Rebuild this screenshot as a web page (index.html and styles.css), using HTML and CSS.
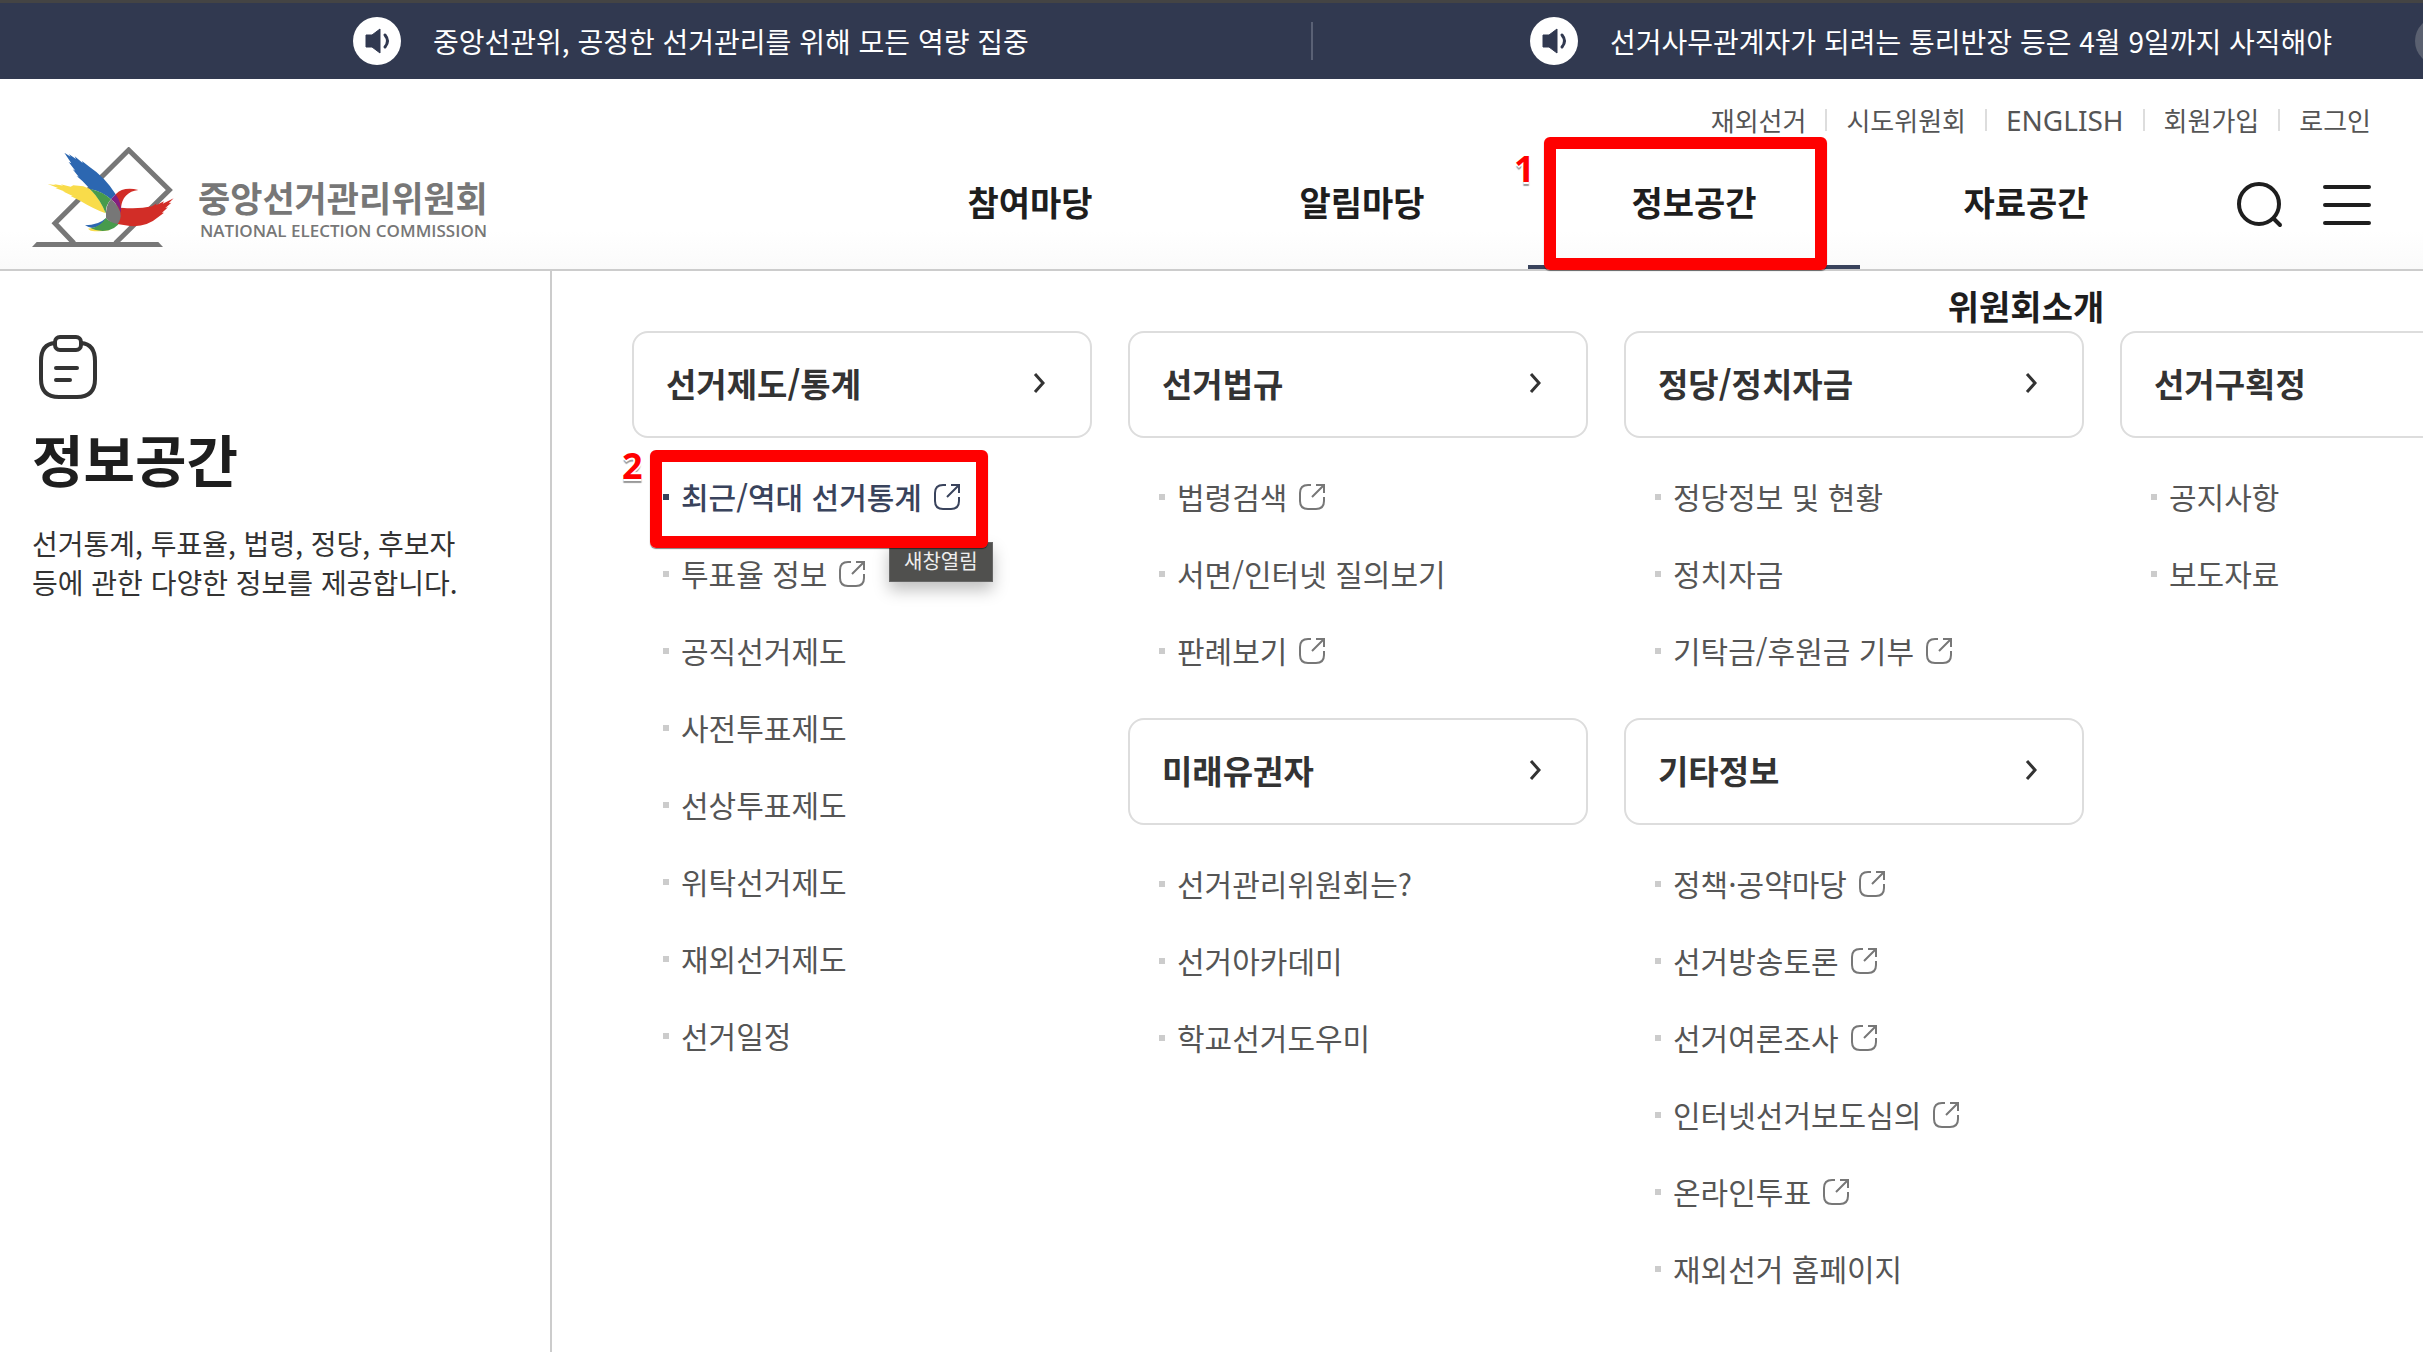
FILE: index.html
```
<!DOCTYPE html>
<html lang="ko">

<head>
    <meta charset="UTF-8">
    <meta name="viewport" content="width=device-width, initial-scale=1.0">
    <title>중앙선거관리위원회</title>
    <link rel="stylesheet" href="styles.css">
</head>

<body>

    <!-- iconos compartidos -->
    <svg class="sprite" aria-hidden="true">
        <symbol id="ico-speaker" viewBox="0 0 48 48">
            <path d="M13 18h6l8-6v24l-8-6h-6z" fill="#313950" stroke="#313950" stroke-linejoin="round" />
            <path d="M32 18q5 6 0 12" fill="none" stroke="#313950" stroke-width="3" stroke-linecap="round" />
        </symbol>
        <symbol id="ico-link" viewBox="0 0 26 26">
            <path d="M12 1H9Q1 1 1 9v8q0 8 8 8h8q8 0 8-8v-4M17 1h8v8M25 1L13 13" fill="none" stroke="currentColor" stroke-width="2" />
        </symbol>
        <symbol id="ico-arrow" viewBox="0 0 12 20">
            <path d="M2 1l8 9-8 9" fill="none" stroke="currentColor" stroke-width="3" />
        </symbol>
    </svg>

    <div class="notice">
        <ul class="notice-list">
            <li><a href="#"><svg class="speaker"><use href="#ico-speaker" /></svg>중앙선관위, 공정한 선거관리를 위해 모든 역량 집중</a></li>
            <li><a href="#"><svg class="speaker"><use href="#ico-speaker" /></svg>선거사무관계자가 되려는 통리반장 등은 4월 9일까지 사직해야</a></li>
        </ul>
        <button type="button" class="notice-next" aria-label="다음"></button>
    </div>

    <header class="header">
        <a href="#" class="logo">
            <svg class="logo-mark" viewBox="6 21 426 300" aria-hidden="true">
                <path d="M132 310L75 250L296 30L418 150L256 310" fill="none" stroke="#777" stroke-width="15" />
                <path d="M6 321L20 306H385L399 321Z" fill="#777" />
                <path d="M53 132L78 136L70 132L100 137L92 133L122 140L130 136L160 139L180 147Q212 178 227 220Q190 206 150 182L122 168L128 168L98 154L106 155L76 144L84 144Z" fill="#f9dc4a" />
                <path d="M103 38L122 50L116 42L138 57L134 49L158 69L156 63L178 80Q226 112 257 163L243 178Q215 154 180 147L158 124L140 108L146 110L128 88L136 92L116 66L124 70Z" fill="#2c67b1" />
                <path d="M180 147Q215 153 243 178Q227 195 227 220Q212 180 180 147Z" fill="#479b4c" />
                <path d="M165 256Q205 256 228 234Q218 258 187 264Q176 263 165 256Z" fill="#2c67b1" />
                <path d="M174 266L188 263Q205 272 240 270Q210 277 182 272Z" fill="#f9dc4a" />
                <path d="M183 265Q213 258 228 233Q240 250 270 245Q258 270 218 273Q198 273 183 265Z" fill="#479b4c" />
                <path d="M257 163Q280 139 325 150Q278 156 273 203Q325 208 366 199L380 190L378 196L402 184L398 191L431 175L416 190L424 188L406 204L414 202L396 218L402 218L384 232Q350 262 300 258L262 252Z" fill="#d22d27" />
                <path d="M243 178L257 163Q275 188 273 220Q265 195 243 178Z" fill="#83207f" />
                <path d="M243 178Q272 202 272 228Q270 246 262 252Q238 248 228 234Q225 198 243 178Z" fill="#777" />
            </svg>
            <span class="logo-text">
                <strong>중앙선거관리위원회</strong>
                <span class="logo-en">NATIONAL ELECTION COMMISSION</span>
            </span>
        </a>

        <div class="header-right">
            <ul class="util">
                <li><a href="#">재외선거</a></li>
                <li><a href="#">시도위원회</a></li>
                <li><a href="#" class="en">ENGLISH</a></li>
                <li><a href="#">회원가입</a></li>
                <li><a href="#">로그인</a></li>
            </ul>
            <div class="gnb">
                <nav>
                    <ul class="gnb-list">
                        <li><a href="#">참여마당</a></li>
                        <li><a href="#">알림마당</a></li>
                        <li class="active">
                            <a href="#">정보공간</a>
                            <span class="mark mark-tab"><b>1</b></span>
                        </li>
                        <li><a href="#">자료공간</a></li>
                        <li><a href="#">위원회소개</a></li>
                    </ul>
                </nav>
                <button type="button" class="btn-icon" aria-label="검색">
                    <svg viewBox="0 0 48 48"><circle cx="23" cy="23" r="20" /><path d="M38 38l6 6" /></svg>
                </button>
                <button type="button" class="btn-icon" aria-label="전체메뉴">
                    <svg viewBox="0 0 48 48"><path d="M2 6h44M2 24h44M2 42h44" /></svg>
                </button>
            </div>
        </div>
    </header>

    <main class="mega">
        <aside class="intro">
            <svg class="intro-icon" viewBox="0 0 60 66" aria-hidden="true">
                <path d="M17 9Q3 10 3 27v18q0 18 18 18h18q18 0 18-18V27Q57 10 43 9" />
                <rect x="17" y="3" width="26" height="13" rx="5" />
                <path d="M18 34h21M18 46h14" />
            </svg>
            <h1>정보공간</h1>
            <p>선거통계, 투표율, 법령, 정당, 후보자 등에 관한 다양한 정보를 제공합니다.</p>
        </aside>

        <div class="columns">
            <div class="column">
                <section>
                    <h2><a href="#">선거제도/통계<svg class="arrow"><use href="#ico-arrow" /></svg></a></h2>
                    <ul class="links">
                        <li class="on">
                            <a href="#">최근/역대 선거통계<svg class="ext"><use href="#ico-link" /></svg></a>
                            <span class="tooltip" role="tooltip">새창열림</span>
                            <span class="mark mark-link"><b>2</b></span>
                        </li>
                        <li><a href="#">투표율 정보<svg class="ext"><use href="#ico-link" /></svg></a></li>
                        <li><a href="#">공직선거제도</a></li>
                        <li><a href="#">사전투표제도</a></li>
                        <li><a href="#">선상투표제도</a></li>
                        <li><a href="#">위탁선거제도</a></li>
                        <li><a href="#">재외선거제도</a></li>
                        <li><a href="#">선거일정</a></li>
                    </ul>
                </section>
            </div>

            <div class="column">
                <section>
                    <h2><a href="#">선거법규<svg class="arrow"><use href="#ico-arrow" /></svg></a></h2>
                    <ul class="links">
                        <li><a href="#">법령검색<svg class="ext"><use href="#ico-link" /></svg></a></li>
                        <li><a href="#">서면/인터넷 질의보기</a></li>
                        <li><a href="#">판례보기<svg class="ext"><use href="#ico-link" /></svg></a></li>
                    </ul>
                </section>
                <section>
                    <h2><a href="#">미래유권자<svg class="arrow"><use href="#ico-arrow" /></svg></a></h2>
                    <ul class="links">
                        <li><a href="#">선거관리위원회는?</a></li>
                        <li><a href="#">선거아카데미</a></li>
                        <li><a href="#">학교선거도우미</a></li>
                    </ul>
                </section>
            </div>

            <div class="column">
                <section>
                    <h2><a href="#">정당/정치자금<svg class="arrow"><use href="#ico-arrow" /></svg></a></h2>
                    <ul class="links">
                        <li><a href="#">정당정보 및 현황</a></li>
                        <li><a href="#">정치자금</a></li>
                        <li><a href="#">기탁금/후원금 기부<svg class="ext"><use href="#ico-link" /></svg></a></li>
                    </ul>
                </section>
                <section>
                    <h2><a href="#">기타정보<svg class="arrow"><use href="#ico-arrow" /></svg></a></h2>
                    <ul class="links">
                        <li><a href="#">정책·공약마당<svg class="ext"><use href="#ico-link" /></svg></a></li>
                        <li><a href="#">선거방송토론<svg class="ext"><use href="#ico-link" /></svg></a></li>
                        <li><a href="#">선거여론조사<svg class="ext"><use href="#ico-link" /></svg></a></li>
                        <li><a href="#">인터넷선거보도심의<svg class="ext"><use href="#ico-link" /></svg></a></li>
                        <li><a href="#">온라인투표<svg class="ext"><use href="#ico-link" /></svg></a></li>
                        <li><a href="#">재외선거 홈페이지</a></li>
                    </ul>
                </section>
            </div>

            <div class="column">
                <section>
                    <h2><a href="#">선거구획정<svg class="arrow"><use href="#ico-arrow" /></svg></a></h2>
                    <ul class="links">
                        <li><a href="#">공지사항</a></li>
                        <li><a href="#">보도자료</a></li>
                    </ul>
                </section>
            </div>
        </div>
    </main>

</body>

</html>
```

FILE: styles.css
```
* {
    box-sizing: border-box;
}

body {
    display: flex;
    flex-direction: column;
    min-height: 100vh;
    margin: 0;
    font-family: "Noto Sans CJK KR", sans-serif;
    color: #333;
    background-color: #fff;
    overflow-x: hidden;
}

ul,
h1,
h2,
p {
    margin: 0;
    padding: 0;
    list-style: none;
}

a {
    color: inherit;
    text-decoration: none;
}

button {
    padding: 0;
    border: none;
    background: none;
    cursor: pointer;
}

.sprite {
    display: none;
}

/* notice bar */
.notice {
    position: relative;
    background-color: #313950;
    border-top: 3px solid #444;
    overflow: hidden;
}

.notice-list {
    display: grid;
    grid-template-columns: 1fr 1fr;
    margin: 0 -67px 0 136px;
}

.notice-list li {
    display: flex;
    align-items: center;
    height: 76px;
    padding-left: 217px;
}

.notice-list li:first-child::after {
    content: "";
    width: 2px;
    height: 38px;
    margin-left: auto;
    background-color: #5a6175;
}

.notice-list a {
    display: flex;
    align-items: center;
    gap: 32px;
    color: #fff;
    font-size: 28px;
    line-height: 40px;
    white-space: nowrap;
}

.speaker {
    width: 48px;
    height: 48px;
    border-radius: 50%;
    background-color: #fff;
}

.notice-next {
    position: absolute;
    top: 14px;
    right: -40px;
    width: 48px;
    height: 48px;
    border-radius: 50%;
    background-color: #5a6070;
}

/* header */
.header {
    position: relative;
    z-index: 1;
    display: flex;
    justify-content: space-between;
    height: 192px;
    padding: 0 52px 0 32px;
    border-bottom: 2px solid #ccc;
    background: linear-gradient(#fff 80%, #fafafa);
}

.logo {
    display: flex;
    align-items: flex-start;
    gap: 24px;
    padding-top: 68px;
    color: #777;
}

.logo-mark {
    width: 142px;
    height: 100px;
}

.logo-text {
    display: flex;
    flex-direction: column;
    padding-top: 26px;
}

.logo-text strong {
    font-size: 35px;
    line-height: 48px;
}

.logo-en {
    padding-left: 2px;
    font-family: "Open Sans", sans-serif;
    font-size: 17px;
    font-weight: 600;
    line-height: 20px;
}

.header-right {
    display: flex;
    flex-direction: column;
    align-items: flex-end;
}

.util {
    display: flex;
    height: 89px;
    padding-top: 21px;
    font-size: 26px;
    line-height: 40px;
    color: #555;
}

.util li {
    display: flex;
    align-items: center;
    height: 40px;
}

.util li + li::before {
    content: "";
    width: 2px;
    height: 22px;
    margin: 0 19px;
    background-color: #ddd;
}

.util .en {
    font-family: "Noto Sans", sans-serif;
    font-size: 28px;
}

.gnb {
    display: flex;
    align-items: flex-start;
}

.gnb nav {
    margin-right: 44px;
}

.gnb-list {
    display: flex;
    flex-wrap: wrap;
    justify-content: flex-end;
    width: 1328px;
    height: 104px;
}

.gnb-list li {
    position: relative;
    width: 332px;
    height: 104px;
    padding-top: 12px;
    text-align: center;
}

.gnb-list li a {
    color: #1e1e1e;
    font-size: 34px;
    font-weight: bold;
    line-height: 50px;
}

.gnb-list .active {
    border-bottom: 4px solid #39435c;
}

.btn-icon {
    width: 48px;
    height: 48px;
    margin-top: 16px;
}

.btn-icon + .btn-icon {
    margin-left: 39px;
}

.btn-icon svg {
    display: block;
    fill: none;
    stroke: #1e1e1e;
    stroke-width: 4;
    stroke-linecap: round;
}

/* mega menu */
.mega {
    display: flex;
    flex: 1;
}

.intro {
    flex: 0 0 552px;
    padding: 63px 80px 0 32px;
    border-right: 2px solid #ccc;
}

.intro-icon {
    display: block;
    width: 60px;
    height: 66px;
    margin-left: 6px;
    fill: none;
    stroke: #333;
    stroke-width: 4;
    stroke-linecap: round;
}

.intro h1 {
    margin-top: 18px;
    font-size: 56px;
    line-height: 80px;
    color: #1e1e1e;
}

.intro p {
    margin-top: 26px;
    font-size: 28px;
    line-height: 39px;
}

.columns {
    display: flex;
    flex: 1;
    gap: 36px;
    min-width: 0;
    padding: 60px 0 24px 80px;
    overflow: hidden;
}

.column {
    flex: 0 0 460px;
}

.column section + section {
    margin-top: 29px;
}

.column h2 a {
    display: flex;
    align-items: center;
    justify-content: space-between;
    height: 107px;
    padding: 0 45px 4px 32px;
    border: 2px solid #ddd;
    border-radius: 16px;
    font-size: 33px;
    line-height: 50px;
}

.arrow {
    width: 12px;
    height: 20px;
}

.links {
    padding: 20px 0 0 31px;
}

.links li {
    position: relative;
    display: flex;
    align-items: center;
    height: 77px;
    color: #555;
}

.links li::before {
    content: "";
    width: 6px;
    height: 6px;
    margin-right: 12px;
    background-color: #ccc;
}

.links a {
    display: flex;
    align-items: center;
    gap: 12px;
    padding-bottom: 2px;
    font-size: 30px;
    line-height: 44px;
}

.ext {
    width: 26px;
    height: 26px;
    margin-top: 2px;
    color: #777;
}

.links .on,
.on .ext {
    color: #39435c;
}

.links .on {
    font-weight: 500;
}

.links .on::before {
    background-color: #39435c;
}

.tooltip {
    position: absolute;
    top: 84px;
    left: 226px;
    z-index: 1;
    height: 40px;
    padding: 0 14px;
    border: 1px solid #666;
    background-color: #50504e;
    box-shadow: 0 8px 16px rgba(0, 0, 0, 0.25);
    color: #eee;
    font-size: 20px;
    font-weight: normal;
    line-height: 36px;
}

/* step markers */
.mark {
    position: absolute;
    z-index: 2;
    border: 12px solid #f00;
    border-radius: 6px;
    box-shadow: 0 1px 1px rgba(0, 0, 0, 0.5);
    pointer-events: none;
}

.mark b {
    position: absolute;
    top: -16px;
    left: -40px;
    color: #f00;
    font-family: "Noto Sans", sans-serif;
    font-size: 36px;
    line-height: 40px;
    text-shadow: 2px 0 #fff, -2px 0 #fff, 0 2px #fff, 0 -2px #fff, 0 4px 1px #999;
}

.mark-tab {
    top: -28px;
    left: 16px;
    width: 283px;
    height: 133px;
}

.mark-tab b {
    top: 0;
    left: -42px;
}

.mark-link {
    top: -8px;
    left: -13px;
    width: 338px;
    height: 98px;
}
```
